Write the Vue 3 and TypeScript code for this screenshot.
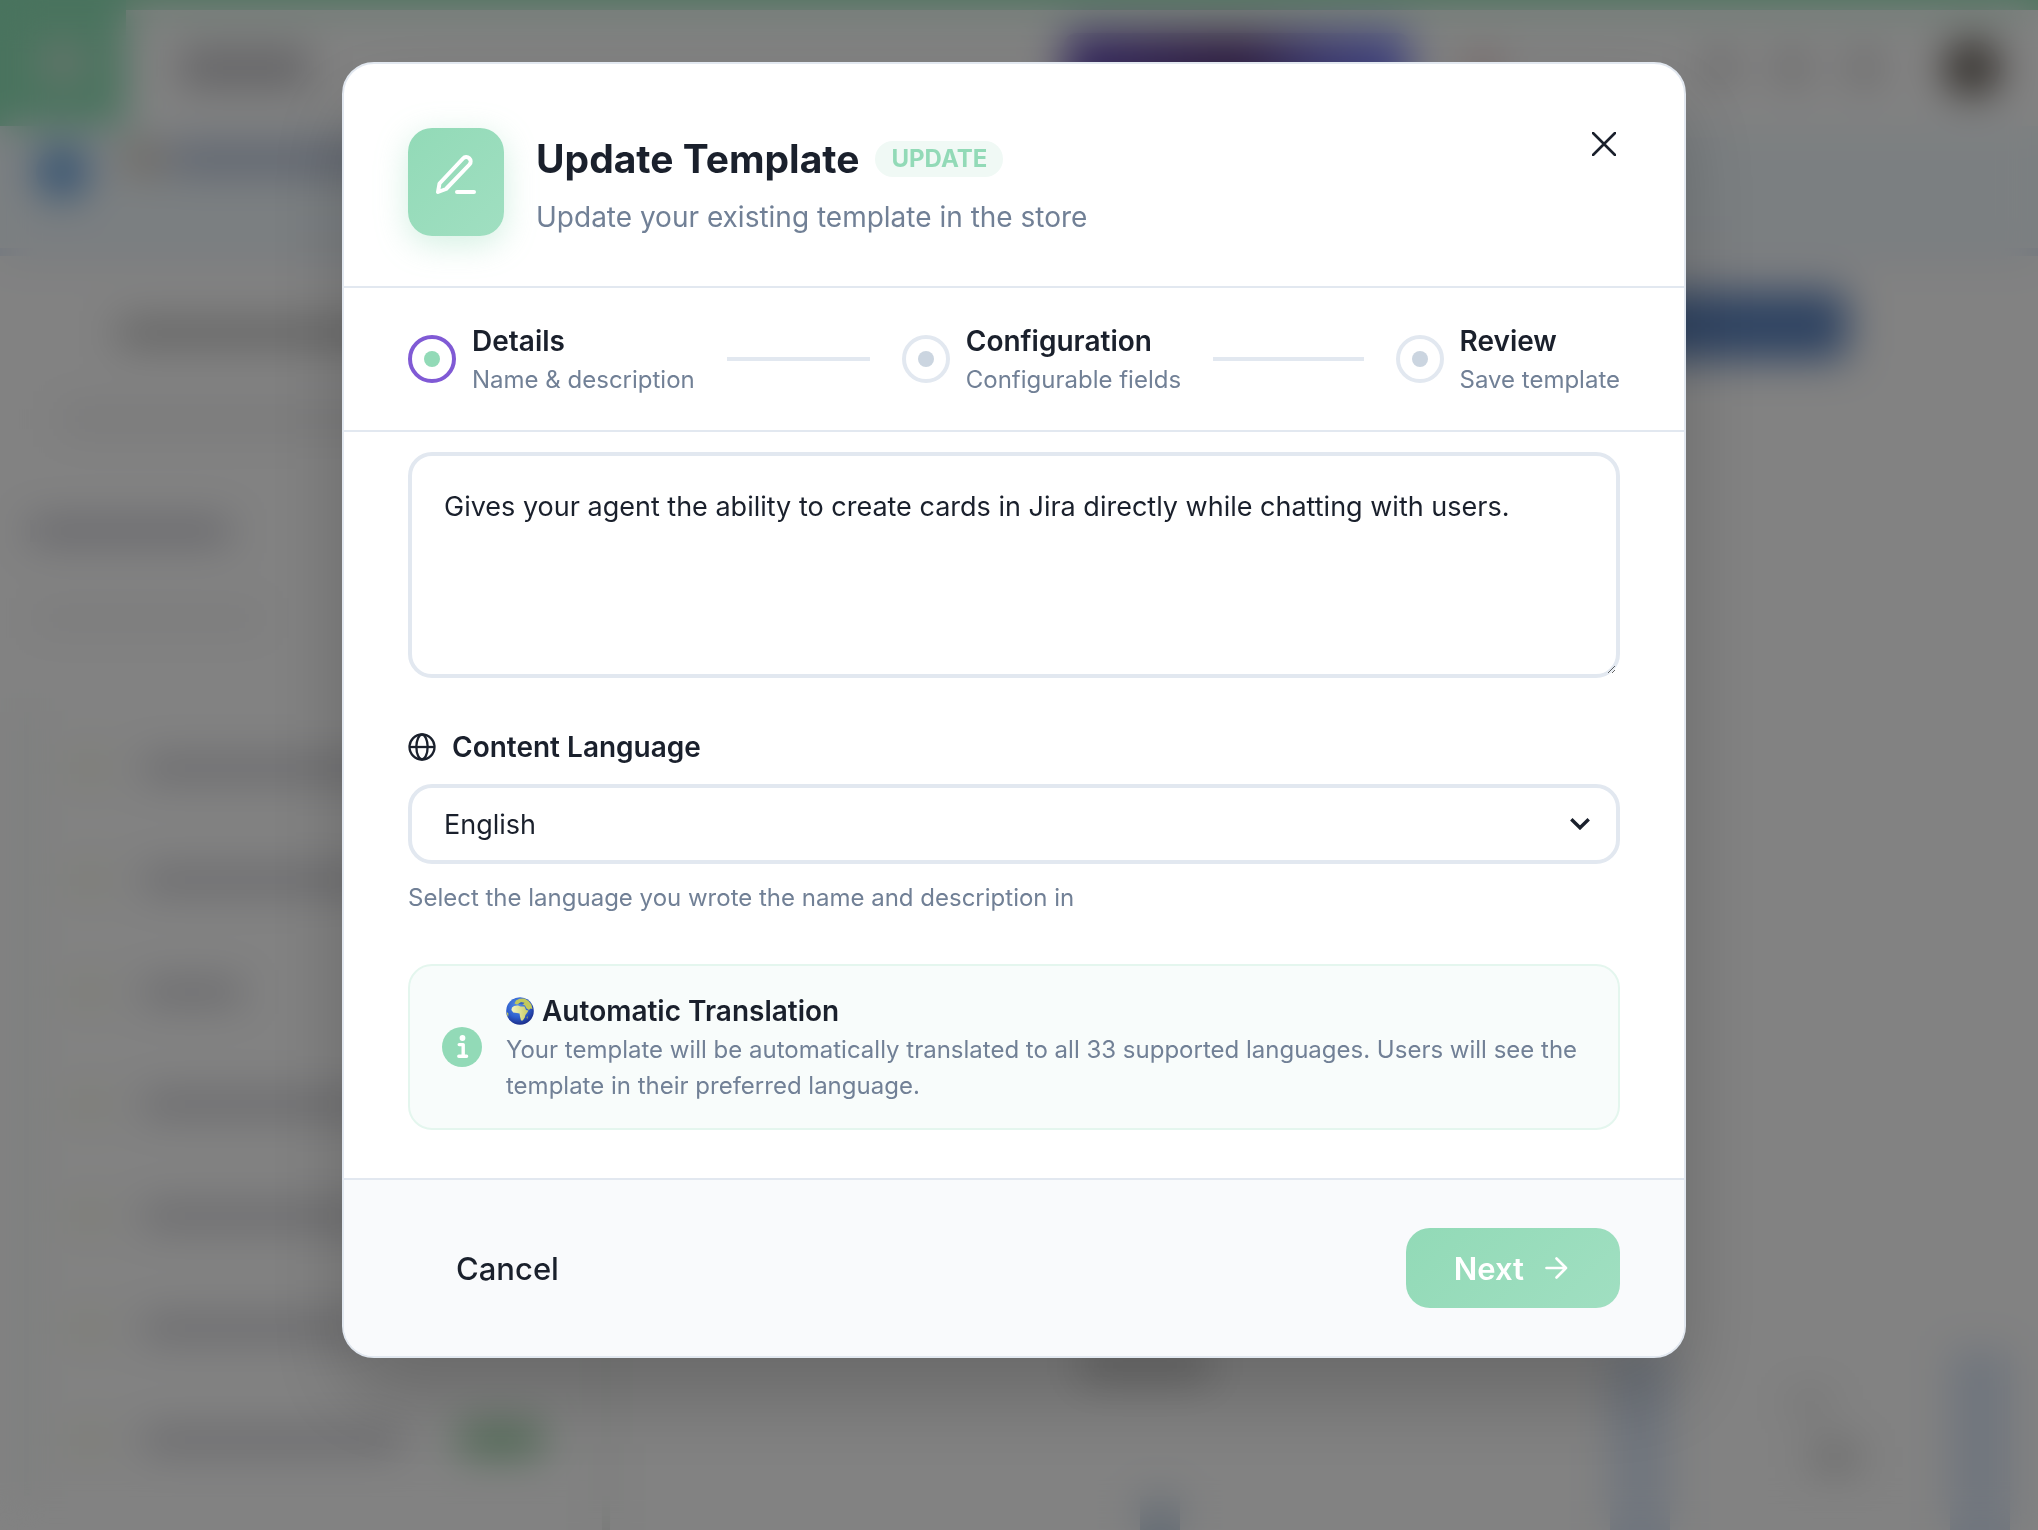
<script setup lang="ts">
import { ref } from 'vue'

interface Step {
  title: string
  hint: string
}

const steps: Step[] = [
  { title: 'Details', hint: 'Name & description' },
  { title: 'Configuration', hint: 'Configurable fields' },
  { title: 'Review', hint: 'Save template' },
]
const current = ref(0)
const language = ref('English')
const description = ref(
  'Gives your agent the ability to create cards in Jira directly while chatting with users.',
)
const menuWidths: number[] = [260, 230, 100, 230, 230, 230, 260]
</script>

<template>
  <div class="app">
    <div class="page" aria-hidden="true">
      <div class="strip"></div>
      <div class="topbar">
        <div class="brand"><span></span></div>
        <div class="crumb"></div>
        <div class="promo"></div>
        <div class="alert"></div>
        <div class="tools"><i></i><i></i><i></i></div>
        <div class="avatar"></div>
      </div>
      <div class="banner">
        <div class="banner-dot"></div>
        <div class="banner-mark"></div>
        <div class="banner-text"></div>
      </div>
      <div class="columns">
        <div class="sidebar">
          <div class="side-title"></div>
          <div class="side-search"></div>
          <div class="side-group"></div>
          <div class="side-note"></div>
          <div class="menu">
            <div v-for="(w, i) in menuWidths" :key="i" class="menu-row">
              <i></i>
              <b :style="{ width: w + 'px' }"></b>
              <em v-if="i === menuWidths.length - 1"></em>
            </div>
          </div>
        </div>
        <div class="content">
          <div class="action"></div>
          <div class="lower">
            <div class="table"><i></i><b></b></div>
            <div class="panel"><div class="card"><i></i><b></b></div></div>
          </div>
        </div>
      </div>
    </div>

    <div class="overlay">
      <section class="modal" role="dialog" aria-labelledby="dialog-title">
        <header class="head">
          <div class="head-icon">
            <svg width="48" height="48" viewBox="0 0 48 48" fill="none" stroke="#fff" stroke-width="4" stroke-linecap="round" stroke-linejoin="round">
              <path d="M6 42 L7.500 33.500 L31 8.500 A4.400 4.400 0 0 1 37.500 14.500 L14 39 Z" />
              <path d="M25 42 H42" />
            </svg>
          </div>
          <div class="head-text">
            <div class="title-row">
              <h1 id="dialog-title">Update Template</h1>
              <span class="badge">UPDATE</span>
            </div>
            <p>Update your existing template in the store</p>
          </div>
          <button class="close" type="button" aria-label="Close">
            <svg width="24" height="24" viewBox="0 0 24 24" fill="none" stroke="#1a202c" stroke-width="2.6" stroke-linecap="round">
              <path d="M1 1 L23 23 M23 1 L1 23" />
            </svg>
          </button>
        </header>

        <ol class="steps">
          <li v-for="(s, i) in steps" :key="s.title" class="step" :class="{ active: i === current }">
            <span class="ring"><span class="dot"></span></span>
            <span class="step-text">
              <span class="step-title">{{ s.title }}</span>
              <span class="step-hint">{{ s.hint }}</span>
            </span>
            <span v-if="i < steps.length - 1" class="line"></span>
          </li>
        </ol>

        <div class="body">
          <textarea v-model="description" aria-label="Description" spellcheck="false"></textarea>

          <label class="field-label" for="language">
            <svg width="28" height="28" viewBox="0 0 28 28" fill="none" stroke="#1a202c" stroke-width="2.300">
              <circle cx="14" cy="14" r="12.500" />
              <ellipse cx="14" cy="14" rx="5.600" ry="12.500" />
              <path d="M1.500 14 H26.500" />
            </svg>
            Content Language
          </label>
          <div class="select-wrap">
            <select id="language" v-model="language">
              <option>English</option>
            </select>
            <svg class="chevron" width="20" height="12" viewBox="0 0 20 12" fill="none" stroke="#1a202c" stroke-width="3.400">
              <path d="M1.300 1.300 L10 9.800 L18.700 1.300" />
            </svg>
          </div>
          <p class="help">Select the language you wrote the name and description in</p>

          <div class="info">
            <svg class="info-icon" width="40" height="40" viewBox="0 0 40 40">
              <circle cx="20" cy="20" r="20" fill="#92dab7" />
              <circle cx="20.500" cy="11" r="2.900" fill="#fff" />
              <path d="M17.200 17.600 H21.200 V29 M16.800 29.300 H24.600" fill="none" stroke="#fff" stroke-width="3.400" stroke-linecap="round" stroke-linejoin="round" />
            </svg>
            <div class="info-text">
              <h2>
                <svg width="28" height="28" viewBox="0 0 28 28">
                  <defs>
                    <radialGradient id="sea" cx="42%" cy="32%" r="68%">
                      <stop offset="0" stop-color="#5b93e6" />
                      <stop offset="0.600" stop-color="#2f5fce" />
                      <stop offset="1" stop-color="#1c2f8c" />
                    </radialGradient>
                    <linearGradient id="land" x1="0" y1="0" x2="1" y2="0">
                      <stop offset="0" stop-color="#f6f5c4" />
                      <stop offset="1" stop-color="#c8cb62" />
                    </linearGradient>
                  </defs>
                  <circle cx="14" cy="14" r="13.800" fill="url(#sea)" />
                  <path d="M6 10.500 Q7.500 8.500 12 8.600 L14.500 9.600 L18.500 9.600 L20 13 L22.500 13.600 L21 16 L19.400 18 L18.800 20.500 L16.800 23.600 L15 23.400 L14 19.500 L13.600 16.600 L11 16 L7.200 15.600 L5.400 13 Z" fill="url(#land)" />
                  <path d="M8.500 6.400 L10 3.600 L13.500 1.800 L18.500 1.600 L22.500 4 L25.400 7.500 L26.400 12 L24.500 11.500 L23 13 L20.600 11.500 L19 8.400 L16.500 7.400 L14 6 L11 7.400 Z" fill="#c3c95c" />
                  <path d="M12.500 6.800 L17 7.600 L18.500 5.800 L15 5 Z" fill="#3a64c0" />
                  <path d="M0.800 15 L2.400 16.500 L2.200 19.500 L1.400 18.500 Z M20.600 20.500 L21.800 19 L21.200 22 Z" fill="#c9cf4e" />
                </svg>
                Automatic Translation
              </h2>
              <p>
                Your template will be automatically translated to all 33 supported languages. Users will see the
                template in their preferred language.
              </p>
            </div>
          </div>
        </div>

        <footer class="foot">
          <button class="cancel" type="button">Cancel</button>
          <button class="next" type="button">
            Next
            <svg width="32" height="32" viewBox="0 0 32 32" fill="none" stroke="#fff" stroke-width="2.700" stroke-linecap="round" stroke-linejoin="round">
              <path d="M6.500 16 H26 M16.500 6.500 L26 16 L16.500 25.500" />
            </svg>
          </button>
        </footer>
      </section>
    </div>
  </div>
</template>

<style>
html,
body,
#app {
  height: 100%;
  margin: 0;
}
</style>

<style scoped>
* {
  box-sizing: border-box;
}
.app {
  height: 100%;
  overflow: hidden;
  font-family: Inter, 'Liberation Sans', sans-serif;
  color: #1a202c;
}
h1,
h2,
p,
ol {
  margin: 0;
  padding: 0;
}
button {
  border: 0;
  background: none;
  padding: 0;
  font-family: inherit;
  color: inherit;
}

/* Workspace behind the dialog */
.page {
  display: flex;
  flex-direction: column;
  height: 100%;
  background: #fff;
}
.strip {
  height: 10px;
  flex: none;
  background: #9be3bc;
}
.topbar {
  display: flex;
  align-items: center;
  height: 116px;
  flex: none;
  padding-right: 38px;
}
.brand {
  display: flex;
  align-items: center;
  justify-content: center;
  width: 126px;
  height: 126px;
  margin-top: -10px;
  background: #90e2b8;
}
.brand span {
  width: 44px;
  height: 36px;
  background: #cfe6d8;
}
.crumb {
  width: 130px;
  height: 40px;
  margin-left: 54px;
  background: #c4c4c8;
}
.promo {
  width: 346px;
  height: 70px;
  margin-left: auto;
  border-radius: 12px;
  background: linear-gradient(90deg, #6a54c0, #5c3c80 50%, #7470dc 75%, #8088ff);
}
.alert {
  width: 26px;
  height: 26px;
  margin: 0 210px 0 60px;
  border-radius: 13px;
  background: #dca4a4;
}
.tools {
  display: flex;
  gap: 44px;
}
.tools i {
  width: 28px;
  height: 28px;
  background: #c0c0c2;
}
.avatar {
  width: 56px;
  height: 56px;
  margin-left: 66px;
  border-radius: 28px;
  background: #5c544c;
}
.banner {
  display: flex;
  align-items: flex-start;
  height: 130px;
  flex: none;
  padding: 20px 36px;
  background: #f2fafe;
  border-bottom: 8px solid #dfe9f8;
}
.banner-dot {
  width: 52px;
  height: 52px;
  border-radius: 26px;
  background: #5c9cdc;
}
.banner-mark {
  width: 30px;
  height: 26px;
  margin: 0 12px 0 40px;
  background: #c8b4a0;
}
.banner-text {
  width: 300px;
  height: 26px;
  background: #b0bbd4;
}
.columns {
  display: flex;
  flex: 1;
}
.sidebar {
  width: 610px;
  border-right: 8px solid #e8ece8;
}
.side-title {
  width: 380px;
  height: 22px;
  margin: 66px 0 0 118px;
  background: #b4b4b4;
}
.side-search {
  width: 400px;
  height: 30px;
  margin: 60px 0 0 60px;
  background: #f0f0f1;
}
.side-group {
  width: 200px;
  height: 22px;
  margin: 86px 0 0 30px;
  background: #c0c0ca;
}
.side-note {
  width: 230px;
  height: 20px;
  margin: 66px 0 0 34px;
  background: #f0f0f1;
}
.menu {
  margin: 84px 0 0 24px;
  border-left: 8px solid #e8f2ee;
}
.menu-row {
  display: flex;
  align-items: center;
  height: 112px;
  padding-left: 42px;
}
.menu-row i {
  width: 30px;
  height: 28px;
  margin-right: 38px;
  background: #f2f4de;
}
.menu-row b {
  height: 22px;
  background: #c8c8ce;
}
.menu-row em {
  width: 90px;
  height: 34px;
  margin-left: 54px;
  border-radius: 17px;
  background: #9cd0a6;
}
.content {
  display: flex;
  flex: 1;
  flex-direction: column;
  justify-content: space-between;
}
.action {
  align-self: flex-end;
  width: 460px;
  height: 70px;
  margin: 34px 190px 0 0;
  border-radius: 12px;
  background: #5c84c0;
}
.lower {
  display: flex;
  justify-content: space-between;
  height: 180px;
  padding-right: 28px;
}
.table {
  display: flex;
  flex-direction: column;
  justify-content: space-between;
  align-items: flex-end;
  width: 600px;
}
.table i {
  width: 130px;
  height: 30px;
  background: #c8c8c8;
}
.table b {
  width: 40px;
  height: 34px;
  margin-right: 30px;
  background: #c8d6e6;
}
.panel {
  width: 400px;
  padding: 0 60px;
  background: #dbe6f6;
}
.card {
  display: flex;
  flex-direction: column;
  align-items: center;
  gap: 30px;
  height: 100%;
  padding-top: 44px;
  background: #fff;
}
.card i {
  width: 40px;
  height: 18px;
  background: #dcdcdc;
}
.card b {
  width: 50px;
  height: 30px;
  margin-left: 50px;
  background: #d4d4d4;
}

/* Dialog */
.overlay {
  position: fixed;
  inset: 0;
  display: flex;
  align-items: flex-start;
  justify-content: center;
  padding: 62px 10px 0 0;
  background: rgba(0, 0, 0, 0.49);
  backdrop-filter: blur(20px);
}
.modal {
  width: 90%;
  max-width: 1344px;
  overflow: hidden;
  border: 2px solid #e2e8f0;
  border-radius: 32px;
  background: #fff;
  box-shadow: 0 40px 80px rgba(0, 0, 0, 0.2);
}
.head {
  display: flex;
  align-items: flex-start;
  gap: 32px;
  padding: 64px 64px 48px;
  border-bottom: 2px solid #e2e8f0;
}
.head-icon {
  display: flex;
  justify-content: center;
  width: 96px;
  height: 108px;
  padding-top: 22px;
  border-radius: 24px;
  background: linear-gradient(135deg, #92dab7, #a0dfc1);
  box-shadow: 0 8px 32px rgba(146, 218, 183, 0.4);
}
.head-text {
  flex: 1;
  display: flex;
  flex-direction: column;
  gap: 6px;
}
.title-row {
  display: flex;
  align-items: center;
  gap: 16px;
}
h1 {
  font-size: 39px;
  line-height: 62px;
  font-weight: 700;
}
.badge {
  padding: 0 16px;
  border-radius: 18px;
  background: #f0f9f5;
  color: #92dab7;
  font-size: 24px;
  line-height: 36px;
  font-weight: 700;
}
.head-text p {
  color: #718096;
  font-size: 28px;
  line-height: 42px;
}
.close {
  display: flex;
  padding: 4px;
}
.steps {
  display: flex;
  padding: 32px 64px;
  list-style: none;
  border-bottom: 2px solid #e2e8f0;
}
.step {
  display: flex;
  flex: 1 1 0;
  align-items: center;
}
.step:last-child {
  flex: none;
}
.ring {
  display: flex;
  flex: none;
  align-items: center;
  justify-content: center;
  width: 48px;
  height: 48px;
  margin-right: 16px;
  border: 4px solid #e2e8f0;
  border-radius: 24px;
}
.dot {
  width: 16px;
  height: 16px;
  border-radius: 8px;
  background: #cbd5e0;
}
.active .ring {
  border-color: #805ad5;
}
.active .dot {
  background: #92dab7;
}
.step-text {
  display: flex;
  flex-direction: column;
  white-space: nowrap;
}
.step-title {
  font-size: 28px;
  line-height: 42px;
  font-weight: 600;
}
.step-hint {
  color: #718096;
  font-size: 24px;
  line-height: 36px;
}
.line {
  flex: 1;
  height: 4px;
  margin: 0 32px;
  background: #e2e8f0;
}
.body {
  display: flex;
  flex-direction: column;
  padding: 20px 64px 48px;
}
textarea,
select {
  width: 100%;
  border: 4px solid #e2e8f0;
  border-radius: 24px;
  background: #fff;
  color: inherit;
  font-family: inherit;
  font-size: 27px;
  outline: none;
}
textarea {
  display: block;
  height: 226px;
  padding: 30px 32px;
  line-height: 42px;
  resize: vertical;
}
.field-label {
  display: flex;
  align-items: center;
  gap: 16px;
  margin: 48px 0 16px;
  font-size: 28px;
  line-height: 42px;
  font-weight: 600;
}
.select-wrap {
  position: relative;
}
select {
  display: block;
  height: 80px;
  padding: 0 32px;
  appearance: none;
}
.chevron {
  position: absolute;
  top: 34px;
  right: 30px;
  pointer-events: none;
}
.help {
  margin: 16px 0 48px;
  color: #718096;
  font-size: 24px;
  line-height: 36px;
}
.info {
  display: flex;
  align-items: center;
  gap: 24px;
  padding: 24px 32px;
  border: 2px solid #e4f6ee;
  border-radius: 24px;
  background: #f8fcfb;
}
.info-icon {
  flex: none;
}
h2 {
  display: flex;
  align-items: center;
  gap: 8px;
  font-size: 28px;
  line-height: 42px;
  font-weight: 600;
}
.info p {
  color: #718096;
  font-size: 24px;
  line-height: 36px;
}
.foot {
  display: flex;
  align-items: center;
  justify-content: space-between;
  padding: 48px 64px;
  border-top: 2px solid #e2e8f0;
  background: #f9fafc;
}
.cancel,
.next {
  height: 80px;
  padding: 0 48px;
  border-radius: 24px;
  font-size: 31px;
  font-weight: 500;
}
.next {
  display: flex;
  align-items: center;
  gap: 16px;
  background: linear-gradient(135deg, #92dab7, #a0dfc1);
  color: #fff;
  font-weight: 600;
}
</style>
